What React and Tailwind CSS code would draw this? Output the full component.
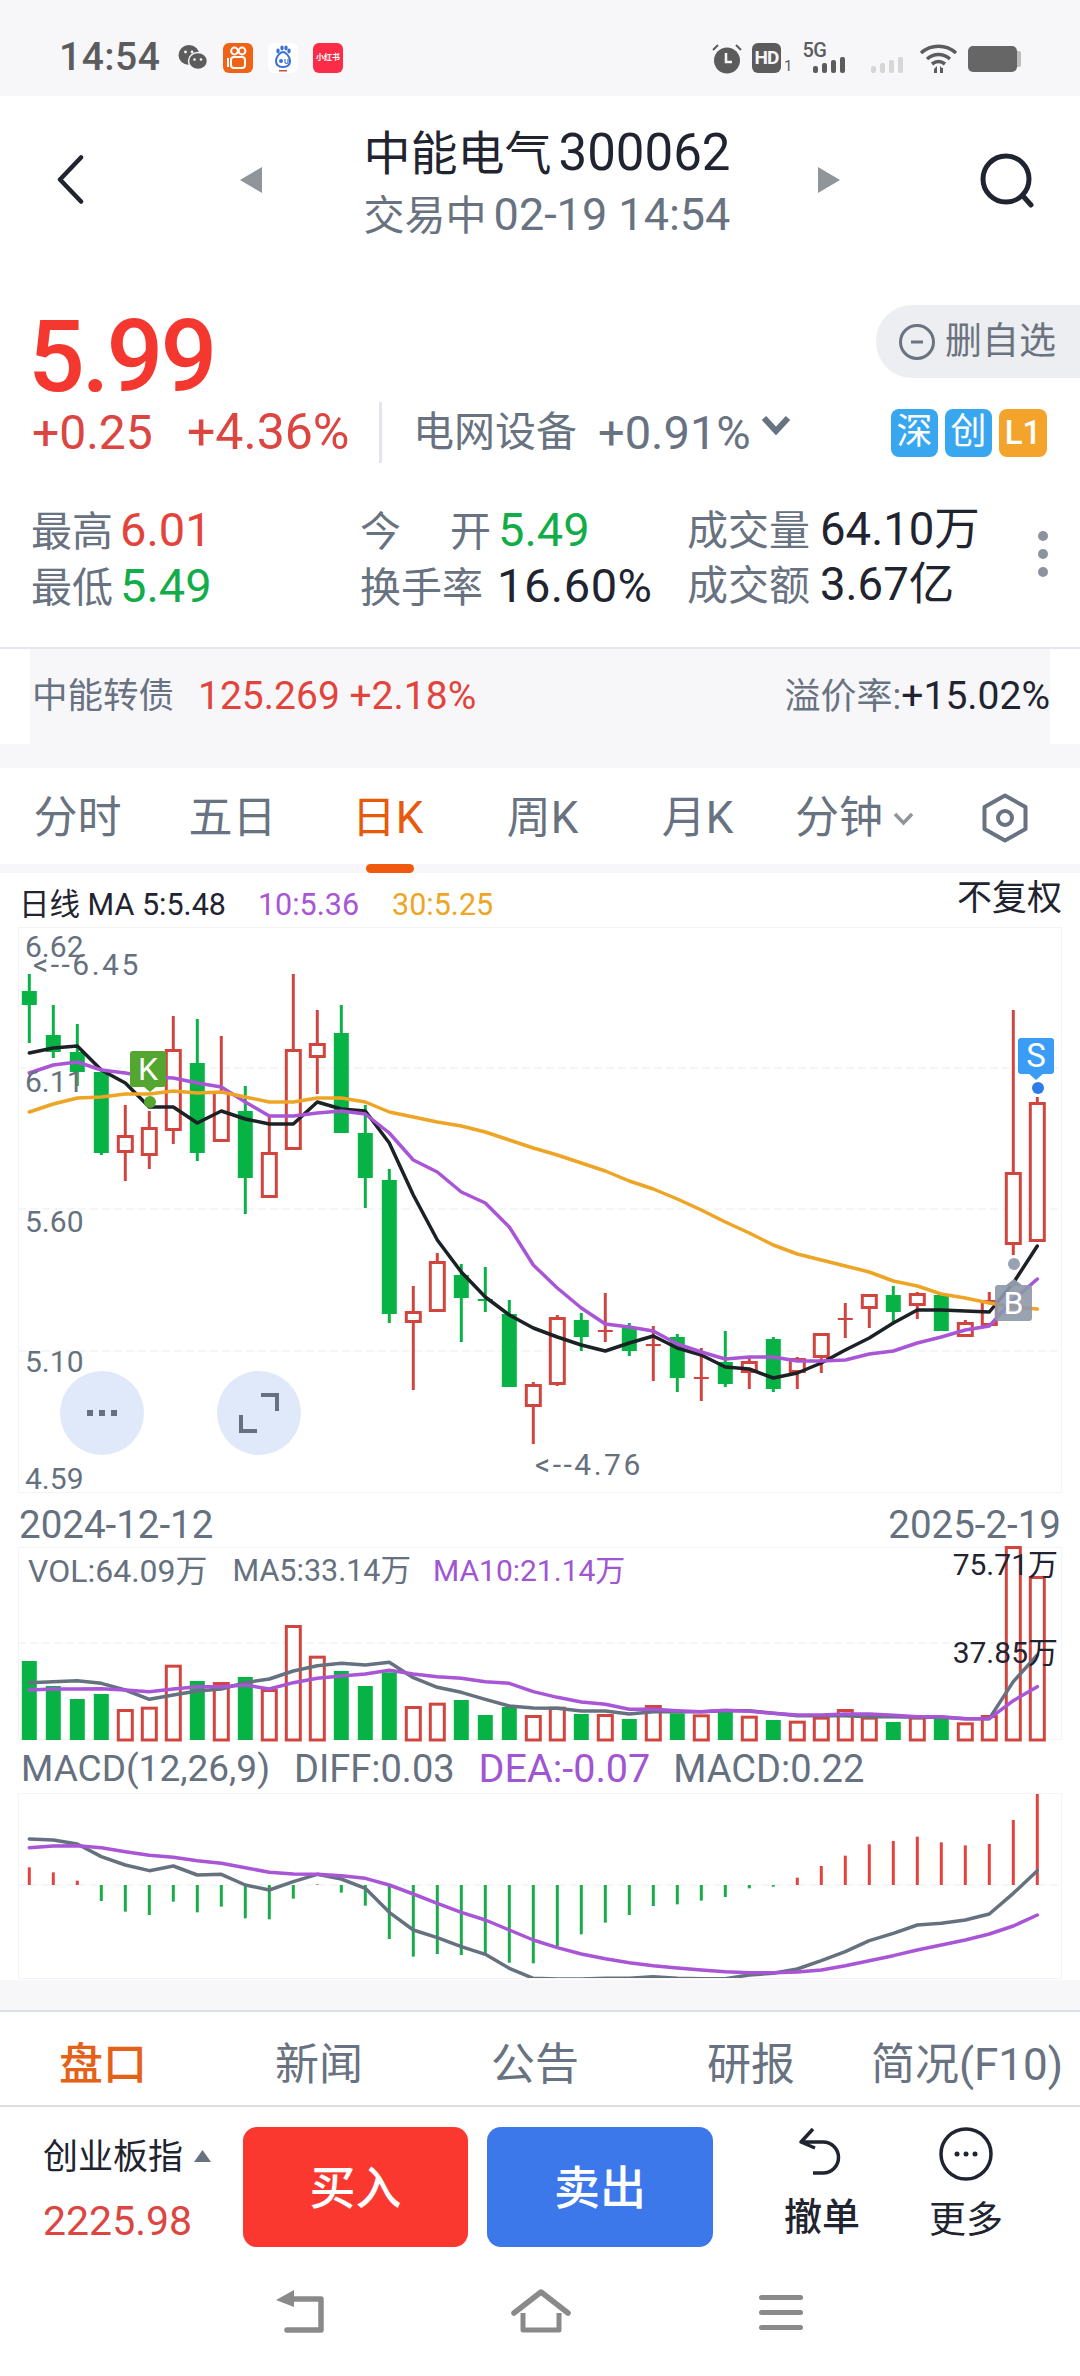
import React from 'react';

const X = (i) => 29.3 + 24 * i;
const GREEN = '#08b345';
const RED = '#d2453f';
const PURPLE = '#a855d6';
const ORANGE = '#eea526';
const BLACK = '#1c2126';
const SLATE = '#667180';

// type, body top, body bottom, high, low (page y)
const candles = [
    ['g', 991, 1005, 974, 1043], ['g', 1035, 1052, 1005, 1058], ['g', 1052, 1072, 1024, 1086], ['g', 1072, 1153, 1072, 1155],
    ['r', 1135, 1153, 1105, 1181], ['r', 1127, 1156, 1111, 1169], ['r', 1049, 1131, 1016, 1144], ['g', 1063, 1153, 1019, 1161],
    ['r', 1091, 1142, 1036, 1142], ['g', 1111, 1178, 1086, 1214], ['r', 1152, 1198, 1117, 1198], ['r', 1049, 1150, 974, 1150],
    ['r', 1043, 1058, 1010, 1094], ['g', 1033, 1133, 1005, 1133], ['g', 1133, 1178, 1105, 1208], ['g', 1180, 1314, 1169, 1323],
    ['r', 1311, 1323, 1286, 1390], ['r', 1261, 1312, 1253, 1312], ['g', 1275, 1298, 1264, 1342], ['g', 1299, 1301, 1267, 1312],
    ['g', 1314, 1387, 1300, 1387], ['r', 1384, 1407, 1382, 1444], ['r', 1317, 1385, 1315, 1386], ['g', 1320, 1337, 1313, 1351],
    ['r', 1330, 1332, 1293, 1342], ['g', 1328, 1351, 1323, 1356], ['r', 1344, 1346, 1326, 1381], ['g', 1337, 1378, 1334, 1392],
    ['r', 1377, 1379, 1348, 1401], ['g', 1362, 1384, 1331, 1387], ['r', 1361, 1373, 1358, 1389], ['g', 1339, 1389, 1337, 1392],
    ['r', 1358, 1373, 1357, 1389], ['r', 1333, 1358, 1333, 1373], ['r', 1318, 1320, 1303, 1338], ['r', 1294, 1309, 1294, 1328],
    ['g', 1295, 1312, 1286, 1323], ['r', 1293, 1306, 1292, 1319], ['g', 1295, 1331, 1295, 1331], ['r', 1322, 1337, 1320, 1337],
    ['r', 1300, 1326, 1292, 1326], ['r', 1172, 1245, 1010, 1255], ['r', 1102, 1242, 1097, 1242],
];
const ma5 = [1053, 1048, 1046, 1070, 1083, 1107, 1107, 1123, 1111, 1119, 1124, 1124, 1102, 1109, 1111, 1143, 1195, 1240, 1272, 1297, 1315, 1328, 1337, 1345, 1351, 1343, 1336, 1348, 1355, 1367, 1369, 1378, 1373, 1363, 1350, 1338, 1323, 1310, 1310, 1311, 1312, 1283, 1246];
const ma10 = [1073, 1065, 1062, 1070, 1073, 1077, 1078, 1083, 1087, 1102, 1116, 1116, 1113, 1111, 1114, 1133, 1160, 1172, 1192, 1203, 1227, 1265, 1288, 1308, 1324, 1327, 1331, 1344, 1352, 1359, 1357, 1357, 1361, 1361, 1360, 1354, 1351, 1343, 1337, 1330, 1326, 1300, 1279];
const ma30 = [1112, 1104, 1098, 1097, 1094, 1094, 1091, 1093, 1092, 1097, 1102, 1102, 1098, 1098, 1102, 1112, 1117, 1122, 1126, 1132, 1140, 1148, 1155, 1163, 1171, 1181, 1189, 1199, 1210, 1222, 1233, 1245, 1254, 1260, 1266, 1272, 1281, 1286, 1294, 1298, 1303, 1307, 1309];

// volume bar tops and lines, read as offsets from y=1490 times 3
const volTop = [513, 588, 627, 612, 657, 650, 524, 573, 576, 561, 597, 405, 497, 543, 588, 547, 648, 638, 630, 675, 651, 675, 650, 672, 672, 687, 645, 670, 673, 658, 677, 690, 692, 680, 657, 680, 696, 680, 685, 697, 675, 168, 258];
const volA = [578, 575, 572, 580, 600, 628, 615, 603, 597, 578, 567, 543, 527, 520, 525, 517, 563, 592, 607, 628, 648, 654, 655, 663, 663, 672, 665, 665, 665, 662, 662, 670, 677, 677, 677, 680, 680, 682, 682, 686, 686, 575, 495];
const volB = [600, 597, 597, 596, 600, 605, 597, 590, 590, 585, 597, 578, 565, 558, 552, 541, 552, 560, 565, 575, 580, 605, 622, 636, 643, 658, 658, 662, 665, 661, 664, 670, 675, 675, 672, 672, 676, 680, 680, 686, 686, 632, 590];

// macd, offsets from y=1750 times 3, zero line at 405
const macd = [352, 367, 392, 453, 485, 495, 455, 487, 470, 505, 508, 446, 403, 428, 467, 567, 620, 612, 615, 612, 638, 640, 590, 553, 518, 495, 468, 463, 452, 441, 415, 410, 383, 348, 317, 283, 273, 260, 277, 286, 282, 210, 130];
const diff = [267, 270, 282, 320, 345, 362, 348, 375, 373, 405, 420, 395, 373, 387, 415, 487, 540, 563, 590, 613, 655, 685, 687, 687, 685, 685, 680, 685, 686, 686, 675, 670, 657, 632, 605, 572, 550, 525, 520, 510, 492, 430, 362];
const dea = [293, 288, 287, 293, 305, 316, 322, 332, 340, 353, 367, 372, 373, 377, 385, 405, 432, 460, 487, 510, 540, 570, 593, 612, 626, 638, 647, 654, 660, 665, 668, 668, 666, 660, 647, 632, 617, 600, 585, 570, 552, 528, 495];

const pts = (arr, fn = (v) => v) => arr.map((v, i) => `${X(i)},${fn(v)}`).join(' ');

const Line = ({ data, color, fn }) => (
    <polyline points={pts(data, fn)} fill="none" stroke={color} strokeWidth="3.5" strokeLinejoin="round" strokeLinecap="round" />
);

const Dash = ({ y }) => <line x1="18" x2="1061" y1={y} y2={y} stroke="#f2f3f5" strokeWidth="1.5" strokeDasharray="8 4" />;

const Candle = ({ c, i }) => {
    const [type, top, bottom, hi, lo] = c;
    const x = X(i);
    if (type === 'g') {
        return (
            <g>
                <line x1={x} x2={x} y1={hi} y2={lo} stroke={GREEN} strokeWidth="3" />
                <rect x={x - 7.5} y={top} width="15" height={bottom - top} fill={GREEN} />
            </g>
        );
    }
    return (
        <g>
            <line x1={x} x2={x} y1={hi} y2={lo} stroke={RED} strokeWidth="3" />
            {bottom - top < 4
                ? <rect x={x - 7.5} y={top} width="15" height={bottom - top} fill={RED} />
                : <rect x={x - 7} y={top + 1.5} width="14" height={bottom - top - 3} fill="#fff" stroke={RED} strokeWidth="3" />}
        </g>
    );
};

const StatusBar = () => (
    <div className="h-[96px] bg-[#f7f7fa] flex items-start text-[#5c5c5c] shrink-0">
        <span className="ml-[59px] mt-[35px] w-[102px] text-[39px] leading-[44px] font-medium tracking-[0.5px]">14:54</span>
        <svg className="ml-[17px] mt-[44px]" width="30" height="27" viewBox="0 0 30 27">
            <ellipse cx="11" cy="11" rx="10.5" ry="10" fill="#5c5c5c" />
            <ellipse cx="20" cy="17" rx="9.5" ry="8.5" fill="#5c5c5c" stroke="#f7f7fa" strokeWidth="1.5" />
            <circle cx="16.5" cy="15.5" r="1.3" fill="#f7f7fa" />
            <circle cx="23" cy="15.5" r="1.3" fill="#f7f7fa" />
            <circle cx="7.5" cy="8" r="1.4" fill="#f7f7fa" />
            <circle cx="14" cy="8" r="1.4" fill="#f7f7fa" />
        </svg>
        <svg className="ml-[15px] mt-[43px]" width="30" height="30" viewBox="0 0 30 30">
            <rect width="30" height="30" rx="6" fill="#ee6316" />
            <circle cx="11.5" cy="8" r="3.4" fill="none" stroke="#fff" strokeWidth="2" />
            <circle cx="19" cy="8" r="3.4" fill="none" stroke="#fff" strokeWidth="2" />
            <rect x="8" y="14" width="14" height="11" rx="3" fill="none" stroke="#fff" strokeWidth="2" />
            <path d="M5 15v9" stroke="#fff" strokeWidth="2" />
        </svg>
        <svg className="ml-[15px] mt-[43px]" width="30" height="30" viewBox="0 0 30 30">
            <rect width="30" height="30" rx="6" fill="#fff" />
            <ellipse cx="10" cy="8" rx="1.7" ry="2.4" fill="#3b6fd4" />
            <ellipse cx="14" cy="5" rx="1.7" ry="2.4" fill="#3b6fd4" />
            <ellipse cx="18" cy="5" rx="1.7" ry="2.4" fill="#3b6fd4" />
            <ellipse cx="21" cy="8" rx="1.7" ry="2.4" fill="#3b6fd4" />
            <path d="M15 9c3 0 7 5 7 9 0 4-3 6-7 6s-7-2-7-6c0-4 4-9 7-9z" fill="none" stroke="#3b6fd4" strokeWidth="2" />
            <circle cx="13" cy="18" r="2" fill="#3b6fd4" />
            <path d="M17 16v3a1.5 1.5 0 0 0 3 0v-3" fill="none" stroke="#3b6fd4" strokeWidth="1.2" />
            <rect x="11" y="27" width="8" height="1.5" fill="#c94a4a" />
        </svg>
        <div className="ml-[15px] mt-[43px] w-[30px] h-[30px] rounded-[6px] bg-[#fb2c47] text-white text-[8px] leading-[30px] text-center font-bold">小红书</div>
        <svg className="ml-[369px] mt-[44px]" width="30" height="30" viewBox="0 0 30 30">
            <circle cx="15" cy="16.5" r="13" fill="#5c5c5c" />
            <path d="M14 9v9h6" fill="none" stroke="#f7f7fa" strokeWidth="2.5" />
            <path d="M1 6l5-5M29 6l-5-5" stroke="#5c5c5c" strokeWidth="2" />
        </svg>
        <div className="ml-[10px] mt-[43px] w-[29px] h-[30px] rounded-[6px] bg-[#5c5c5c] text-[#f7f7fa] text-[19px] leading-[30px] text-center font-bold tracking-[-1px]">HD</div>
        <span className="ml-[3px] mt-[58px] text-[15px] leading-[16px]">1</span>
        <div className="relative ml-[10px] mt-[43px] w-[46px] h-[30px]">
            <span className="absolute left-0 top-0 text-[20px] leading-[15px] font-medium tracking-[-0.5px]">5G</span>
            <svg className="absolute left-[11px] top-[14px]" width="35" height="16" viewBox="0 0 35 16">
                <rect x="0" y="9" width="5" height="7" rx="2" fill="#5c5c5c" />
                <rect x="9" y="6" width="5" height="10" rx="2" fill="#5c5c5c" />
                <rect x="18" y="3" width="5" height="13" rx="2" fill="#5c5c5c" />
                <rect x="27" y="0" width="5" height="16" rx="2" fill="#5c5c5c" />
            </svg>
        </div>
        <svg className="ml-[23px] mt-[57px]" width="35" height="16" viewBox="0 0 35 16">
            <rect x="0" y="9" width="5" height="7" rx="2" fill="#d6d6d6" />
            <rect x="9" y="6" width="5" height="10" rx="2" fill="#d6d6d6" />
            <rect x="18" y="3" width="5" height="13" rx="2" fill="#d6d6d6" />
            <rect x="27" y="0" width="5" height="16" rx="2" fill="#d6d6d6" />
        </svg>
        <svg className="ml-[13px] mt-[44px]" width="39" height="30" viewBox="0 0 39 30">
            <path d="M2 9c10-9 25-9 35 0M8 15c7-6 16-6 23 0M13 20c4-3 9-3 13 0" fill="none" stroke="#5c5c5c" strokeWidth="3.5" />
            <path d="M15 25l3-3v7h-3zM21 22l3 3h-3zM21 24h3v5h-3z" fill="#5c5c5c" />
        </svg>
        <div className="ml-[10px] mt-[46px] flex items-center">
            <div className="w-[49px] h-[26px] rounded-[5px] bg-[#666666]"></div>
            <div className="w-[4px] h-[16px] rounded-r-[2px] bg-[#bdbdbd]"></div>
        </div>
    </div>
);

const Header = () => (
    <div className="h-[194px] bg-white flex items-start shrink-0">
        <svg className="ml-[57px] mt-[59px]" width="27" height="49" viewBox="0 0 27 49">
            <path d="M24 2.5L3 24.5L24 46.5" fill="none" stroke="#1f2430" strokeWidth="4.5" strokeLinecap="round" strokeLinejoin="round" />
        </svg>
        <svg className="ml-[156px] mt-[71px]" width="22" height="26" viewBox="0 0 22 26"><path d="M22 0V26L0 13z" fill="#8f9599" /></svg>
        <div className="ml-[102px] w-[366px] pt-[25px] flex flex-col items-center whitespace-nowrap">
            <div className="h-[64px] leading-[64px] text-[#1f2430] text-[47px]">中能电气<span className="text-[51px] ml-[7px]">300062</span></div>
            <div className="h-[60px] leading-[60px] text-[#687280] text-[41px]">交易中<span className="text-[45px] ml-[7px]">02-19 14:54</span></div>
        </div>
        <svg className="ml-[88px] mt-[71px]" width="22" height="26" viewBox="0 0 22 26"><path d="M0 0V26L22 13z" fill="#8f9599" /></svg>
        <svg className="ml-[140px] mt-[56px]" width="54" height="56" viewBox="0 0 54 56">
            <circle cx="26" cy="27" r="23" fill="none" stroke="#1f2430" strokeWidth="5" />
            <path d="M43 44l8 9" stroke="#1f2430" strokeWidth="5" strokeLinecap="round" />
        </svg>
    </div>
);

const Label = ({ children }) => <span className="text-[#687280] text-[41px]">{children}</span>;

const Quote = () => (
    <div className="bg-white shrink-0 h-[357px] pt-[15px]">
        <div className="h-[97px] flex items-start justify-between">
            <span className="ml-[28px] mt-[10px] text-[100px] leading-[84px] font-medium text-[#f4372f] tracking-[-3px]">5.99</span>
            <div className="w-[204px] h-[73px] rounded-l-[36px] bg-[#eceef1] flex items-center pl-[23px]">
                <svg width="36" height="36" viewBox="0 0 36 36">
                    <circle cx="18" cy="18" r="16.5" fill="none" stroke="#6b7380" strokeWidth="3" />
                    <path d="M12 18h12" stroke="#6b7380" strokeWidth="3" />
                </svg>
                <span className="ml-[10px] text-[37px] text-[#6b7380]">删自选</span>
            </div>
        </div>
        <div className="h-[61px] flex items-center">
            <span className="ml-[32px] w-[155px] text-[48px] leading-[61px] text-[#dc4540]">+0.25</span>
            <span className="w-[192px] text-[50px] leading-[61px] text-[#dc4540] whitespace-nowrap">+4.36%</span>
            <div className="w-[3px] h-[61px] bg-[#e2e5ea]"></div>
            <span className="ml-[31px] text-[41px] text-[#687280]">电网设备</span>
            <span className="ml-[21px] w-[154px] text-[47px] leading-[61px] text-[#687280]">+0.91%</span>
            <svg className="ml-[9px] -mt-[16px]" width="30" height="20" viewBox="0 0 30 20">
                <path d="M3 3l12 13L27 3" fill="none" stroke="#687280" strokeWidth="6" />
            </svg>
            <div className="ml-[100px] flex gap-[7px]">
                <div className="w-[47px] h-[48px] rounded-[8px] bg-[#38a7f0] text-white text-[36px] leading-[46px] text-center">深</div>
                <div className="w-[47px] h-[48px] rounded-[8px] bg-[#38a7f0] text-white text-[36px] leading-[46px] text-center">创</div>
                <div className="w-[48px] h-[48px] rounded-[8px] bg-[#f5a42b] text-white text-[33px] leading-[48px] text-center font-medium">L1</div>
            </div>
        </div>
        <div className="mt-[40px] flex">
            <div className="ml-[31px] w-[329px] text-[47px] leading-[54px]">
                <div><Label>最高</Label><span className="ml-[7px] text-[#e2443c]">6.01</span></div>
                <div><Label>最低</Label><span className="ml-[7px] text-[#12ad48]">5.49</span></div>
            </div>
            <div className="w-[327px] text-[47px] leading-[54px] whitespace-nowrap">
                <div><Label>今</Label><span className="ml-[49px]"><Label>开</Label></span><span className="ml-[7px] text-[#12ad48]">5.49</span></div>
                <div><Label>换手率</Label><span className="ml-[14px] text-[#1f2430] tracking-[0.5px]">16.60%</span></div>
            </div>
            <div className="text-[45.5px] leading-[54px] whitespace-nowrap text-[#1f2430]">
                <div><Label>成交量</Label><span className="ml-[10px]">64.10万</span></div>
                <div><Label>成交额</Label><span className="ml-[10px]">3.67亿</span></div>
            </div>
            <div className="ml-auto mr-[32px] mt-[28px] flex flex-col gap-[8px]">
                <div className="w-[10px] h-[10px] rounded-full bg-[#8b939e]"></div>
                <div className="w-[10px] h-[10px] rounded-full bg-[#8b939e]"></div>
                <div className="w-[10px] h-[10px] rounded-full bg-[#8b939e]"></div>
            </div>
        </div>
    </div>
);

const Bond = () => (
    <div className="shrink-0">
        <div className="h-[2px] bg-[#e6e8ef]"></div>
        <div className="h-[95px] bg-white px-[30px]">
            <div className="h-full bg-[#f7f7fa] flex items-center pl-[2px] whitespace-nowrap">
                <span className="text-[35.5px] text-[#687280]">中能转债</span>
                <span className="ml-[24px] text-[#e2443c] text-[39px]">125.269 +2.18%</span>
                <span className="ml-auto text-[36px] text-[#687280]">溢价率:</span>
                <span className="text-[#1f2430] text-[39px]">+15.02%</span>
            </div>
        </div>
        <div className="h-[24px] bg-[#f7f7fa]"></div>
    </div>
);

const KTabs = () => (
    <div className="shrink-0">
        <div className="h-[96px] bg-white flex items-center pt-[3px] text-[44px] text-[#687280]">
            <div className="w-[155px] shrink-0 text-center">分时</div>
            <div className="w-[155px] shrink-0 text-center">五日</div>
            <div className="w-[155px] shrink-0 text-center text-[#e8590c]">日K</div>
            <div className="w-[155px] shrink-0 text-center">周K</div>
            <div className="w-[155px] shrink-0 text-center">月K</div>
            <div className="w-[155px] shrink-0 flex items-center justify-center pl-[4px]">
                分钟
                <svg className="ml-[10px] mt-[2px]" width="21" height="14" viewBox="0 0 21 14">
                    <path d="M2 2l8.5 9L19 2" fill="none" stroke="#8f9599" strokeWidth="3.5" />
                </svg>
            </div>
            <div className="w-[150px] shrink-0 flex justify-center">
                <svg width="46" height="50" viewBox="0 0 46 50">
                    <path d="M23 2.5L43.5 14v22L23 47.5 2.5 36V14z" fill="none" stroke="#687280" strokeWidth="4" strokeLinejoin="round" />
                    <circle cx="23" cy="25" r="7" fill="none" stroke="#687280" strokeWidth="4" />
                </svg>
            </div>
        </div>
        <div className="h-[9px] bg-[#f7f7fa]">
            <div className="ml-[366px] w-[48px] h-full rounded-full bg-[#ef5a0f]"></div>
        </div>
    </div>
);

const MainChart = () => (
    <div className="relative h-[566px] mx-[18px] border border-[#f3f4f6]">
        <svg className="block overflow-visible" width="1042" height="564" viewBox="19 928 1042 564">
            <Dash y={1068} />
            <Dash y={1209} />
            <Dash y={1351} />
            {candles.map((c, i) => <Candle key={i} c={c} i={i} />)}
            <Line data={ma5} color={BLACK} />
            <Line data={ma10} color={PURPLE} />
            <Line data={ma30} color={ORANGE} />
            <path d="M143 1086h14l-7 6z" fill="#55a630" />
            <circle cx="150" cy="1102" r="6" fill="#55a630" />
            <path d="M1005 1286h18l-9-7z" fill="#8e98a8" />
            <circle cx="1014" cy="1264" r="6" fill="#98a2b3" />
            <path d="M1028 1073h16l-8 7z" fill="#3b9cf5" />
            <circle cx="1038" cy="1088" r="6" fill="#2b7de9" />
        </svg>
        <span className="absolute left-[6px] top-[4px] text-[30px] leading-none text-[#667180]">6.62</span>
        <span className="absolute left-[14px] top-[22px] text-[30px] leading-none text-[#667180] tracking-[2.5px]">&lt;--6.45</span>
        <span className="absolute left-[6px] top-[139px] text-[30px] leading-none text-[#667180]">6.11</span>
        <span className="absolute left-[6px] top-[279px] text-[30px] leading-none text-[#667180]">5.60</span>
        <span className="absolute left-[6px] top-[419px] text-[30px] leading-none text-[#667180]">5.10</span>
        <span className="absolute left-[6px] top-[536px] text-[30px] leading-none text-[#667180]">4.59</span>
        <span className="absolute left-[516px] top-[522px] text-[30px] leading-none text-[#667180] tracking-[2.5px]">&lt;--4.76</span>
        <div className="absolute left-[41px] top-[443px] w-[84px] h-[84px] rounded-full bg-[#dfe9fa] flex items-center justify-center gap-[6px]">
            <div className="w-[6px] h-[6px] bg-[#667180]"></div>
            <div className="w-[6px] h-[6px] bg-[#667180]"></div>
            <div className="w-[6px] h-[6px] bg-[#667180]"></div>
        </div>
        <div className="absolute left-[198px] top-[443px] w-[84px] h-[84px] rounded-full bg-[#dfe9fa] flex items-center justify-center">
            <svg width="40" height="40" viewBox="0 0 40 40">
                <path d="M22 2h16v16M2 22v16h16" fill="none" stroke="#667180" strokeWidth="4" />
            </svg>
        </div>
        <div className="absolute left-[111px] top-[123px] w-[36px] h-[36px] rounded-[3px] bg-[#55a630] text-white text-[32px] leading-[36px] text-center">K</div>
        <div className="absolute left-[999px] top-[110px] w-[36px] h-[36px] rounded-[3px] bg-[#3b9cf5] text-white text-[33px] leading-[36px] text-center">S</div>
        <div className="absolute left-[976px] top-[357px] w-[37px] h-[36px] rounded-[3px] bg-[#8e98a8]/90 text-white text-[32px] leading-[36px] text-center">B</div>
    </div>
);

const VolChart = () => (
    <div className="relative h-[193px] mx-[18px] border border-[#f3f4f6]">
        <svg className="block overflow-visible" width="1042" height="191" viewBox="19 1548 1042 191">
            <Dash y={1643} />
            {candles.map((c, i) => {
                const top = 1490 + volTop[i] / 3;
                return c[0] === 'g'
                    ? <rect key={i} x={X(i) - 7.5} y={top} width="15" height={1740 - top} fill={GREEN} />
                    : <rect key={i} x={X(i) - 7} y={top + 1.5} width="14" height={1740 - top - 1.5} fill="#fff" stroke={RED} strokeWidth="3" />;
            })}
            <Line data={volA} color={SLATE} fn={(v) => 1490 + v / 3} />
            <Line data={volB} color={PURPLE} fn={(v) => 1490 + v / 3} />
        </svg>
        <div className="absolute left-[9px] top-[6px] flex items-center text-[30.5px] leading-[34px] whitespace-nowrap text-[#667180]">
            <span className="text-[32px]">VOL:64.09万</span>
            <span className="ml-[25px]">MA5:33.14万</span>
            <span className="ml-[22px] text-[30px] text-[#a055d2]">MA10:21.14万</span>
        </div>
        <span className="absolute right-[3px] top-[0px] text-[30px] leading-[34px] text-[#1f2430]">75.71万</span>
        <span className="absolute right-[3px] top-[88px] text-[30px] leading-[34px] text-[#1f2430]">37.85万</span>
    </div>
);

const MacdChart = () => (
    <div className="h-[186px] mx-[18px] border border-[#f3f4f6]">
        <svg className="block overflow-hidden" width="1042" height="184" viewBox="19 1794 1042 184">
            <Dash y={1885} />
            {macd.map((v, i) => {
                const y = 1750 + v / 3;
                const up = v < 405;
                return (
                    <rect key={i} x={X(i) - 1.5} y={up ? y : 1885} width="3" height={Math.abs(y - 1885)} fill={up ? '#e0463e' : '#18ad4a'} />
                );
            })}
            <Line data={diff} color={SLATE} fn={(v) => 1750 + v / 3} />
            <Line data={dea} color={PURPLE} fn={(v) => 1750 + v / 3} />
        </svg>
    </div>
);

const Chart = () => (
    <div className="bg-white h-[1107px] shrink-0 overflow-hidden">
        <div className="h-[54px] relative whitespace-nowrap">
            <div className="pl-[19px] pt-[14px] flex text-[30.5px] leading-[36px] text-[#1f2430]">
                <span>日线 MA 5:5.48</span>
                <span className="ml-[32px] text-[#a855d6]">10:5.36</span>
                <span className="ml-[33px] text-[#eea526]">30:5.25</span>
            </div>
            <span className="absolute right-[18px] top-[4px] text-[35px] leading-[44px] text-[#1f2430]">不复权</span>
        </div>
        <MainChart />
        <div className="h-[54px] px-[19px] pt-[10px] flex justify-between text-[38.5px] leading-[44px] text-[#667180]">
            <span>2024-12-12</span>
            <span>2025-2-19</span>
        </div>
        <VolChart />
        <div className="h-[53px] pl-[21px] pt-[8px] flex text-[38px] leading-[42px] text-[#667180] whitespace-nowrap">
            <span className="text-[37px]">MACD(12,26,9)</span>
            <span className="ml-[24px]">DIFF:0.03</span>
            <span className="ml-[24px] text-[39.5px] text-[#a055d2]">DEA:-0.07</span>
            <span className="ml-[23px]">MACD:0.22</span>
        </div>
        <MacdChart />
    </div>
);

const BottomTabs = () => (
    <div className="shrink-0">
        <div className="h-[30px] bg-[#f7f7fa]"></div>
        <div className="h-[2px] bg-[#dde1e6]"></div>
        <div className="h-[93px] -ml-[5px] w-[1080px] pt-[12px] bg-white grid grid-cols-5 items-center text-center text-[44px] text-[#687280] whitespace-nowrap">
            <div className="text-[#e4611a] font-medium">盘口</div>
            <div>新闻</div>
            <div>公告</div>
            <div>研报</div>
            <div>简况(F10)</div>
        </div>
        <div className="h-[2px] bg-[#dedede]"></div>
    </div>
);

const BottomBar = () => (
    <div className="h-[163px] bg-white flex items-start shrink-0 pt-[20px]">
        <div className="w-[243px] pl-[43px]">
            <div className="flex items-center h-[44px] mt-[9px]">
                <span className="text-[35px] text-[#1f2430]">创业板指</span>
                <svg className="ml-[11px] -mt-[4px]" width="17" height="12" viewBox="0 0 17 12"><path d="M8.5 0L17 12H0z" fill="#687280" /></svg>
            </div>
            <div className="mt-[17px] text-[41px] leading-[48px] text-[#dc4540]">2225.98</div>
        </div>
        <div className="w-[225px] h-[120px] pt-[3px] rounded-[14px] bg-[#fb3830] text-white text-[46px] font-medium flex items-center justify-center">买入</div>
        <div className="ml-[19px] w-[226px] h-[120px] pt-[3px] rounded-[14px] bg-[#3d78ea] text-white text-[46px] font-medium flex items-center justify-center">卖出</div>
        <div className="ml-[37px] w-[144px] flex flex-col items-center">
            <svg width="48" height="48" viewBox="0 0 48 48">
                <path d="M15 3L3 16l14 6M3 16h22a15.5 15.5 0 0 1 0 31H15" fill="none" stroke="#1f2430" strokeWidth="3.5" strokeLinejoin="round" transform="translate(0,-1)" />
            </svg>
            <span className="mt-[20px] text-[38px] leading-[44px] font-medium text-[#1f2430]">撤单</span>
        </div>
        <div className="w-[144px] flex flex-col items-center">
            <svg width="54" height="54" viewBox="0 0 54 54">
                <circle cx="27" cy="27" r="25" fill="none" stroke="#1f2430" strokeWidth="3.5" />
                <circle cx="18" cy="27" r="2.5" fill="#1f2430" />
                <circle cx="27" cy="27" r="2.5" fill="#1f2430" />
                <circle cx="36" cy="27" r="2.5" fill="#1f2430" />
            </svg>
            <span className="mt-[18px] text-[37px] leading-[44px] text-[#1f2430]">更多</span>
        </div>
    </div>
);

const NavBar = () => (
    <div className="h-[106px] bg-white flex items-start shrink-0 pt-[19px]">
        <svg className="ml-[275px]" width="50" height="44" viewBox="0 0 50 44">
            <path d="M18 10H46V41H12" fill="none" stroke="#8a8a8a" strokeWidth="5.5" strokeLinejoin="round" strokeLinecap="round" />
            <path d="M19 1V18L1 11z" fill="#8a8a8a" />
        </svg>
        <svg className="ml-[186px]" width="60" height="44" viewBox="0 0 60 44">
            <path d="M3 24L30 3l27 21" fill="none" stroke="#8a8a8a" strokeWidth="5.5" strokeLinecap="round" strokeLinejoin="round" />
            <path d="M12 24v17h36V24" fill="none" stroke="#8a8a8a" strokeWidth="5" strokeLinejoin="round" />
        </svg>
        <div className="ml-[188px] mt-[6px] w-[44px] flex flex-col gap-[10px]">
            <div className="h-[5px] rounded-full bg-[#8a8a8a]"></div>
            <div className="h-[5px] rounded-full bg-[#8a8a8a]"></div>
            <div className="h-[5px] rounded-full bg-[#8a8a8a]"></div>
        </div>
    </div>
);

const App = () => (
    <div className="w-[1080px] h-[2376px] overflow-hidden flex flex-col bg-white font-[Roboto,'Noto_Sans_CJK_SC',sans-serif]">
        <StatusBar />
        <Header />
        <Quote />
        <Bond />
        <KTabs />
        <Chart />
        <BottomTabs />
        <BottomBar />
        <NavBar />
    </div>
);

export default App;
